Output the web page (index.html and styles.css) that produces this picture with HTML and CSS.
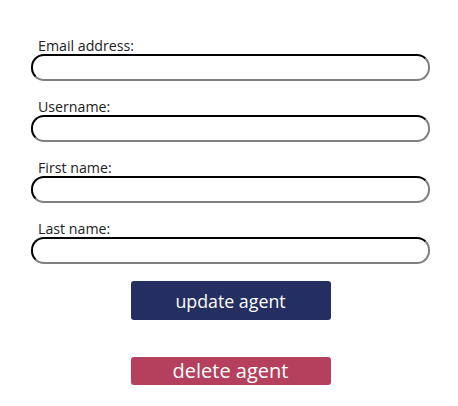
FILE: index.html
```html
<!DOCTYPE html>
<html>
<head>
<meta charset="utf-8">
<link rel="stylesheet" href="styles.css">
</head>
<body>
<form class="form">
  <div class="field">
    <label class="label">Email address:</label>
    <input class="input" type="text">
  </div>
  <div class="field">
    <label class="label">Username:</label>
    <input class="input" type="text">
  </div>
  <div class="field">
    <label class="label">First name:</label>
    <input class="input" type="text">
  </div>
  <div class="field">
    <label class="label">Last name:</label>
    <input class="input" type="text">
  </div>
  <div class="actions">
    <button type="button" class="btn btn-update">update agent</button>
    <button type="button" class="btn btn-delete">delete agent</button>
  </div>
</form>
</body>
</html>
```
FILE: styles.css
```css
html, body {
  margin: 0;
  padding: 0;
  background: #fff;
}
body {
  font-family: "Open Sans", "DejaVu Sans", sans-serif;
  color: #222;
}
.form {
  width: 399px;
  margin: 0 0 0 31px;
  padding-top: 37px;
  display: flex;
  flex-direction: column;
}
.field {
  display: flex;
  flex-direction: column;
  margin-bottom: 17px;
}
.label {
  font-size: 14.2px;
  line-height: 17px;
  padding-left: 7px;
}
.input {
  box-sizing: border-box;
  height: 27px;
  width: 399px;
  margin: 0;
  border: 2px inset #767676;
  border-top-color: #1a1a1a;
  border-left-color: #1a1a1a;
  border-right-color: #808080;
  border-bottom-color: #808080;
  border-radius: 13px;
  background: #fff;
  outline: none;
}
.actions {
  display: flex;
  flex-direction: column;
  align-items: center;
  padding-top: 0;
}
.btn {
  width: 200px;
  border: none;
  border-radius: 3px;
  color: #fff;
  font-family: "Open Sans", "DejaVu Sans", sans-serif;
  padding: 0;
}
.btn-update {
  height: 39px;
  background: #252e60;
  font-size: 17.8px;
}
.btn-delete {
  height: 28px;
  margin-top: 37px;
  background: #b5405d;
  font-size: 20px;
  line-height: 28px;
}
```
